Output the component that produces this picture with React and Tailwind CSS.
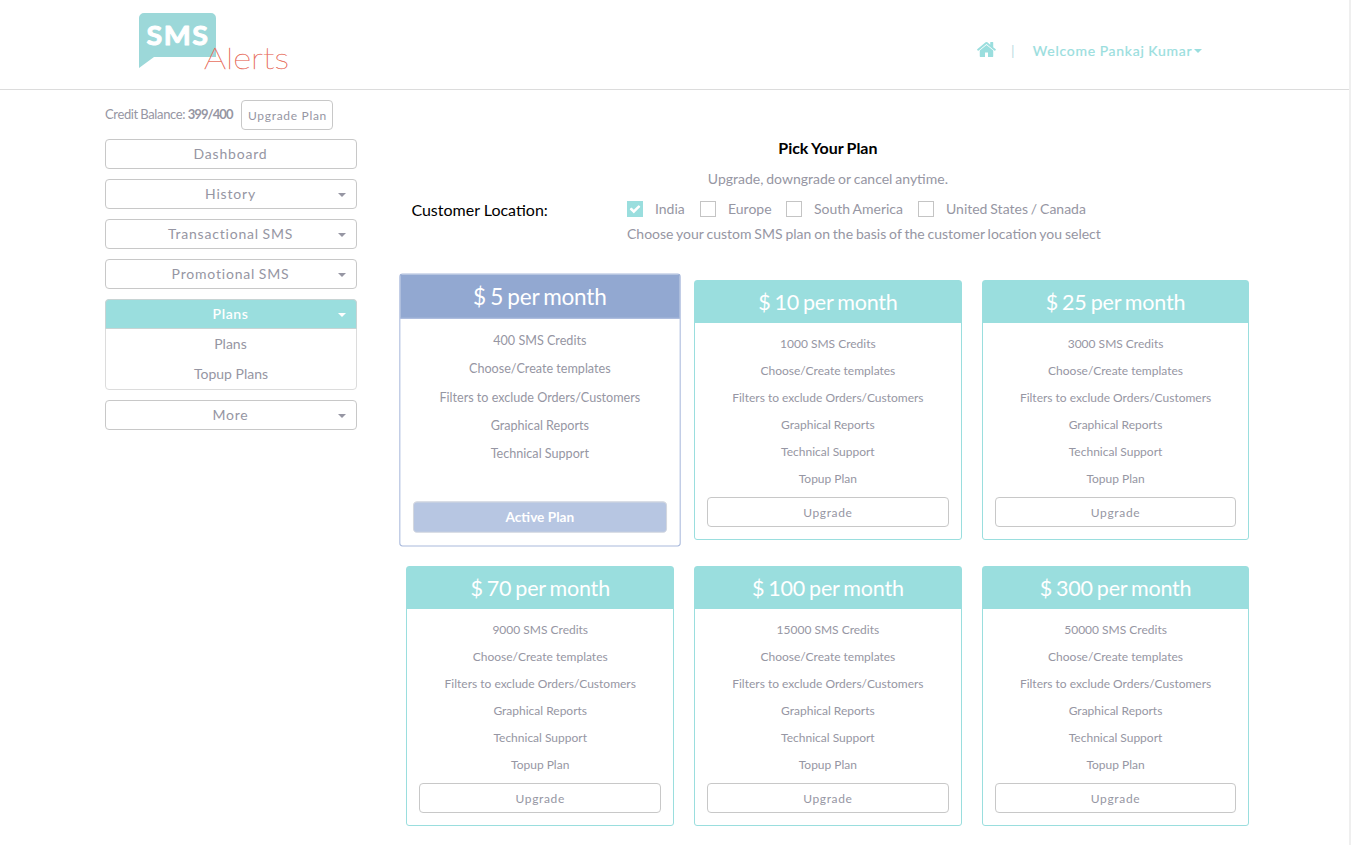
const plans = [
  { price: 5, credits: 400, active: true },
  { price: 10, credits: 1000 },
  { price: 25, credits: 3000 },
  { price: 70, credits: 9000 },
  { price: 100, credits: 15000 },
  { price: 300, credits: 50000 },
];

const features = [
  "Choose/Create templates",
  "Filters to exclude Orders/Customers",
  "Graphical Reports",
  "Technical Support",
];

function Caret({ className = "" }) {
  return (
    <span
      className={`inline-block h-0 w-0 border-x-4 border-t-4 border-x-transparent border-t-current ${className}`}
    />
  );
}

function HomeIcon() {
  return (
    <svg width="19" height="15" viewBox="24 253 1616 1283" fill="currentColor" className="-mt-1">
      <path d="M1408 992v480q0 26-19 45t-45 19H960v-384H704v384H320q-26 0-45-19t-19-45V992q0-1 .5-3t.5-3l575-474 575 474q1 2 1 6zm223-69l-62 74q-8 9-21 11h-3q-13 0-21-7L832 424l-692 577q-12 8-24 7-13-2-21-11l-62-74q-8-10-7-23.5T37 878l719-599q32-26 76-26t76 26l244 204V288q0-14 9-23t23-9h192q14 0 23 9t9 23v408l219 182q10 8 11 21.5t-7 23.5z" />
    </svg>
  );
}

function CheckIcon() {
  return (
    <svg width="12" height="12" viewBox="0 0 1792 1792" fill="currentColor">
      <path d="M1671 566q0 40-28 68l-724 724-136 136q-28 28-68 28t-68-28l-136-136-362-362q-28-28-28-68t28-68l136-136q28-28 68-28t68 28l294 295 656-657q28-28 68-28t68 28l136 136q28 28 28 68z" />
    </svg>
  );
}

function Logo() {
  return (
    <svg width="160" height="66" viewBox="0 0 160 66" className="ml-[138px] mt-3 shrink-0">
      <path d="M6 1h67a5 5 0 0 1 5 5v39H16L1 56V6a5 5 0 0 1 5-5z" fill="#9cd8d9" />
      <text x="8.5" y="33" textLength="63" lengthAdjust="spacingAndGlyphs" fill="#fff" stroke="#fff" strokeWidth="1" strokeLinejoin="round" letterSpacing="1.5" fontFamily="Lato, sans-serif" fontWeight="700" fontSize="27.5">SMS</text>
      <text x="66" y="56.5" textLength="85" lengthAdjust="spacingAndGlyphs" fill="#e8705f" stroke="#e8705f" strokeWidth="0.35" fontFamily="Lato, sans-serif" fontWeight="100" fontSize="30">Alerts</text>
    </svg>
  );
}

function MenuItem({ label, caret = true }) {
  return (
    <button className="relative flex h-[30px] w-full items-center justify-center rounded-[4px] border border-[#c8c8c8] pr-px text-sm tracking-[0.8px] [word-spacing:-0.7px]">
      {label}
      {caret && <Caret className="absolute right-[10px] top-[13px]" />}
    </button>
  );
}

function Sidebar() {
  return (
    <aside className="w-[252px] pt-[10px]">
      <div className="flex h-[30px] items-start">
        <span className="w-[136px] whitespace-nowrap pt-1 text-[13px] leading-5 tracking-[-0.35px] [word-spacing:-0.6px]">
          Credit Balance: <b className="tracking-[-0.9px]">399/400</b>
        </span>
        <button className="h-[30px] w-[92px] whitespace-nowrap rounded-[4px] border border-[#c8c8c8] pl-px pt-[2px] text-xs tracking-[0.7px]">
          Upgrade Plan
        </button>
      </div>
      <nav className="mt-[9px] flex flex-col gap-[10px]">
        <MenuItem label="Dashboard" caret={false} />
        <MenuItem label="History" />
        <MenuItem label="Transactional SMS" />
        <MenuItem label="Promotional SMS" />
        <div className="h-[91px] rounded-[4px] border border-[#dcdcdc] text-center text-sm">
          <button className="relative -mx-px -mt-px flex h-[30px] w-[252px] items-center justify-center rounded-t-[4px] border border-[#c8d4d4] bg-[#9adede] pr-px font-semibold tracking-[0.6px] text-white">
            Plans
            <Caret className="absolute right-[10px] top-[13px]" />
          </button>
          <div className="pr-px leading-[30px]">Plans</div>
          <div className="leading-[30px]">Topup Plans</div>
        </div>
        <MenuItem label="More" />
      </nav>
    </aside>
  );
}

function Location({ label, checked, className }) {
  return (
    <label className={`flex items-center gap-3 whitespace-nowrap ${className}`}>
      {checked ? (
        <span className="flex h-4 w-4 items-center justify-center bg-[#9adede] text-white">
          <CheckIcon />
        </span>
      ) : (
        <span className="h-4 w-4 border border-[#c4c4c4]" />
      )}
      {label}
    </label>
  );
}

function PlanCard({ price, credits, active }) {
  return (
    <section
      className={`flex h-[260px] flex-col rounded-[3px] border text-center text-xs ${
        active ? "scale-105 border-[#a9b9dc]" : "border-[#9adede]"
      }`}
    >
      <h3
        className={`h-[42px] text-[21.5px] tracking-[-0.2px] [word-spacing:-1.3px] ${
          active
            ? "border-b border-[#a9b9dc] bg-[#92a8d1] leading-[43px]"
            : "bg-[#9adede] leading-[43px]"
        } text-white`}
      >
        $ {price} per month
      </h3>
      <ul className="mt-[7px] h-[167px] leading-[27px]">
        <li>{credits} SMS Credits</li>
        {features.map((f) => (
          <li key={f}>{f}</li>
        ))}
        {!active && <li>Topup Plan</li>}
      </ul>
      <button
        className={`mx-3 h-[30px] rounded-[4px] border pt-[2px] ${
          active
            ? "border-[#d3d7df] bg-[#b7c6e2] text-[13px] font-bold text-white"
            : "border-[#c8c8c8] tracking-[0.65px]"
        }`}
      >
        {active ? "Active Plan" : "Upgrade"}
      </button>
    </section>
  );
}

export default function App() {
  return (
    <div className="h-[845px] w-[1351px] overflow-hidden border-r-2 border-[#efefef] bg-white font-['Lato',sans-serif] text-[#9696a3]">
      <header className="flex h-[90px] border-b border-[#dcdcdc]">
        <Logo />
        <div className="ml-[679px] box-content flex h-[22px] items-center whitespace-nowrap pt-[40px] text-sm tracking-[0.85px] text-[#9adede]">
          <HomeIcon />
          <span className="ml-[15px] text-[#b9dcdf]">|</span>
          <span className="ml-[17.5px] tracking-[0.76px] [word-spacing:-0.7px] [-webkit-text-stroke:0.2px_#9adede]">Welcome Pankaj Kumar</span>
          <Caret className="ml-[2px]" />
        </div>
      </header>
      <div className="flex pl-[105px]">
        <Sidebar />
        <main className="ml-[49.4px] w-[843px] pt-[48px]">
          <h2 className="text-center text-base font-bold leading-5 tracking-[-0.05px] [word-spacing:-0.5px] text-black">Pick Your Plan</h2>
          <p className="mt-[11px] text-center text-sm leading-5 [word-spacing:-0.7px]">Upgrade, downgrade or cancel anytime.</p>
          <div className="mt-[10px] flex pl-[5px]">
            <div className="w-[215.6px] text-base leading-[22px] text-black">Customer Location:</div>
            <div className="text-sm leading-5 [word-spacing:-0.7px]">
              <div className="flex">
                <Location label="India" checked className="w-[73px]" />
                <Location label="Europe" className="w-[86px]" />
                <Location label="South America" className="w-[132px]" />
                <Location label="United States / Canada" className="w-[170px]" />
              </div>
              <p className="mt-[5px]">Choose your custom SMS plan on the basis of the customer location you select</p>
            </div>
          </div>
          <div className="mt-[36px] grid grid-cols-3 gap-x-5 gap-y-[26px]">
            {plans.map((p) => (
              <PlanCard key={p.price} {...p} />
            ))}
          </div>
        </main>
      </div>
    </div>
  );
}
